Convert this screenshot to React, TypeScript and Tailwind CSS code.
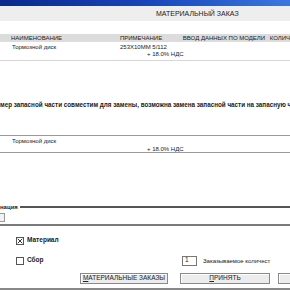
import React from "react";

const font = { fontFamily: '"Liberation Sans", "DejaVu Sans", Arial, sans-serif' };

function Check({ checked }: { checked?: boolean }) {
  return (
    <div className="flex h-[8px] w-[8px] items-center justify-center border border-[#555] bg-white">
      {checked && (
        <svg viewBox="0 0 8 8" className="h-[6px] w-[6px]">
          <path d="M1 1L7 7M7 1L1 7" stroke="#222" strokeWidth="1.2" />
        </svg>
      )}
    </div>
  );
}

function Btn({ children, className = "" }: { children?: React.ReactNode; className?: string }) {
  return (
    <div
      className={`flex h-[11px] items-center justify-center border border-[#8a8a8a] bg-[#ececec] text-[6.5px] text-[#222] shadow-[inset_1px_1px_0_#fff] ${className}`}
    >
      {children}
    </div>
  );
}

export default function App() {
  return (
    <div
      className="flex h-[290px] w-[290px] flex-col overflow-hidden bg-white text-[6.5px] leading-none text-[#1a1a1a]"
      style={font}
    >
      {/* title bar */}
      <div className="h-[6px] shrink-0 bg-gradient-to-r from-[#0a2a8c] via-[#1844b8] to-[#3a78e0]" />

      {/* window header */}
      <div className="flex h-[15px] shrink-0 items-center bg-[#eeeeee] pl-[156px] text-[7px]">
        МАТЕРИАЛЬНЫЙ ЗАКАЗ
      </div>

      <div className="h-[13px] shrink-0" />

      {/* table header */}
      <div className="flex h-[8px] shrink-0 items-center bg-[#dcdcdc] text-[6px] whitespace-nowrap">
        <div className="w-[120px] pl-[11px]">НАИМЕНОВАНИЕ</div>
        <div className="w-[63px]">ПРИМЕЧАНИЕ</div>
        <div className="w-[87px]">ВВОД ДАННЫХ ПО МОДЕЛИ</div>
        <div>КОЛИЧ</div>
      </div>

      <div className="flex h-[9px] shrink-0 items-center text-[6px] whitespace-nowrap">
        <div className="w-[120px] pl-[12px]">Тормозной диск</div>
        <div>253X10MM 5/112</div>
      </div>
      <div className="flex h-[6px] shrink-0 items-center pl-[147px] text-[6px]">+ 18.0% НДС</div>

      <div className="mt-[3px] h-px shrink-0 bg-[#d6d6d6]" />

      <div className="h-[40px] shrink-0" />

      <div className="flex h-[8px] shrink-0 items-center whitespace-nowrap text-[6.3px] font-bold">
        мер запасной части совместим для замены, возможна замена запасной части на запасную ч
      </div>

      <div className="h-[26px] shrink-0" />

      <div className="h-px shrink-0 bg-[#9a9a9a]" />
      <div className="flex h-[9px] shrink-0 items-center pl-[12px] text-[6px]">Тормозной диск</div>
      <div className="flex h-[7px] shrink-0 items-center pl-[147px] text-[6px]">+ 18.0% НДС</div>
      <div className="h-px shrink-0 bg-[#9a9a9a]" />

      <div className="h-[51px] shrink-0" />

      {/* group box */}
      <div className="flex h-[6px] shrink-0 items-center gap-[2px]">
        <div className="text-[6px] font-bold whitespace-nowrap">нация</div>
        <div className="h-[2px] flex-1 bg-[#555]" />
      </div>
      <div className="flex h-[14px] shrink-0 items-center">
        <div className="h-[9px] w-[5px] border border-l-0 border-[#999] bg-[#f2f2f2]" />
      </div>
      <div className="h-[2px] shrink-0 bg-[#7a7a7a]" />

      {/* bottom panel */}
      <div className="flex flex-1 flex-col bg-white">
        <div className="mt-[10px] flex h-[9px] items-center gap-[3px] pl-[16px]">
          <Check checked />
          <span className="text-[6.5px] font-bold">Материал</span>
        </div>
        <div className="mt-[10px] flex h-[11px] items-center">
          <div className="flex w-[182px] items-center gap-[3px] pl-[16px]">
            <Check />
            <span className="text-[6.5px] font-bold">Сбор</span>
          </div>
          <div className="flex h-[10px] w-[15px] items-center border border-[#777] bg-white pl-[2px] text-[6.5px]">1</div>
          <span className="ml-[6px] whitespace-nowrap text-[6px]">Заказываемое количест</span>
        </div>
        <div className="mt-[7px] flex items-center">
          <div className="w-[80px] shrink-0" />
          <Btn className="w-[88px] shrink-0">
            <span className="underline decoration-[0.5px]">М</span>АТЕРИАЛЬНЫЕ ЗАКАЗЫ
          </Btn>
          <div className="w-[12px] shrink-0" />
          <Btn className="w-[90px] shrink-0">
            <span className="underline decoration-[0.5px]">П</span>РИНЯТЬ
          </Btn>
          <div className="w-[8px] shrink-0" />
          <Btn className="w-[20px] shrink-0" />
        </div>
        <div className="mt-auto h-[2px] bg-[#888]" />
      </div>
    </div>
  );
}
